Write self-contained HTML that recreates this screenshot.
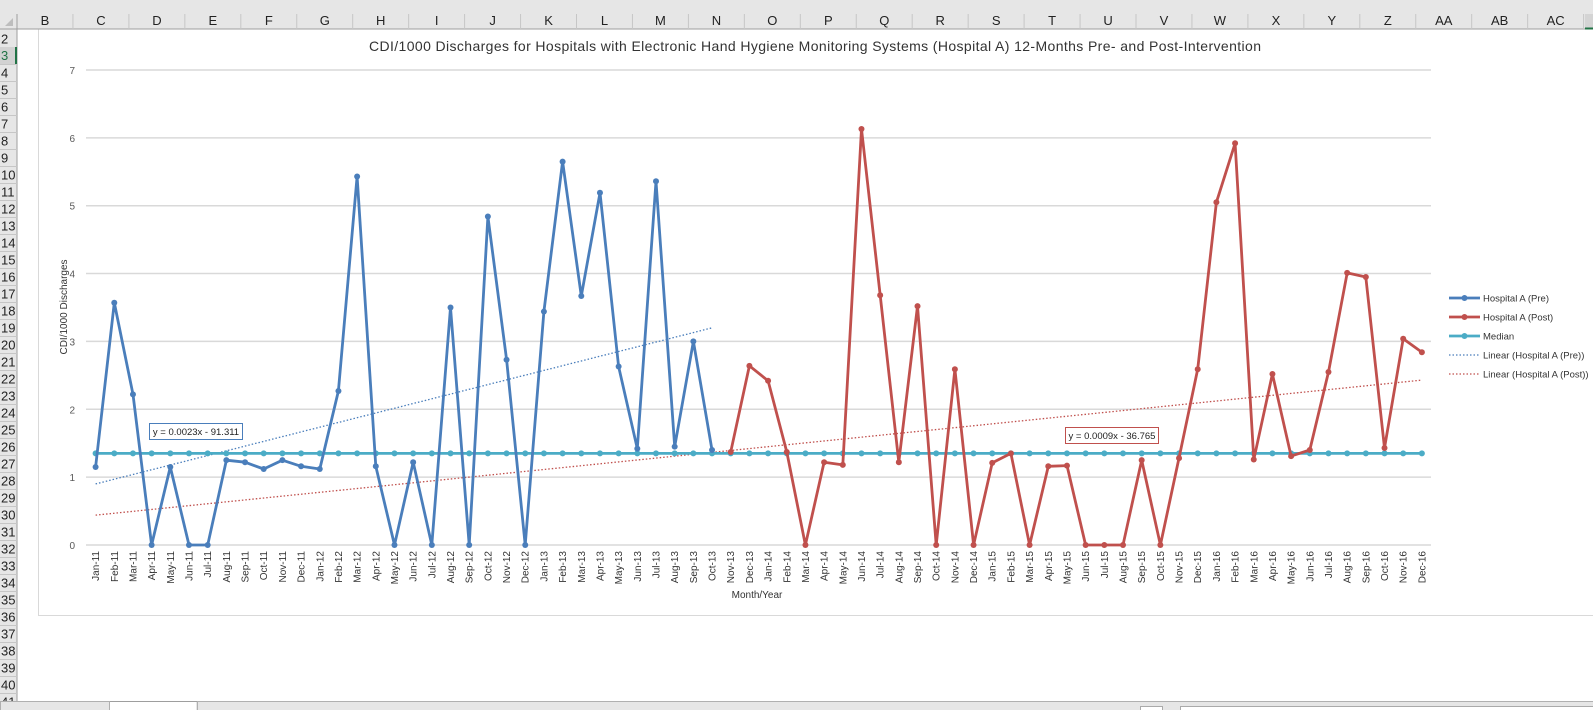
<!DOCTYPE html>
<html><head><meta charset="utf-8"><style>
body{margin:0;width:1593px;height:710px;overflow:hidden;background:#fff;font-family:"Liberation Sans",sans-serif;position:relative}
</style></head><body>
<svg id="s" width="1593" height="710" xmlns="http://www.w3.org/2000/svg" style="position:absolute;left:0;top:0;font-family:'Liberation Sans',sans-serif">
</svg>
<script>
const s=document.getElementById('s');let h='';
// chart
h+='<rect x="38.5" y="20.5" width="1600" height="595" fill="#fff" stroke="#d9d9d9"/>';
const Y=v=>545-v*67.86, X=i=>95.6+i*18.68;
for(let v=0;v<=7;v++){h+=`<line x1="86" y1="${Y(v)}" x2="1431" y2="${Y(v)}" stroke="#d9d9d9" stroke-width="1.5"/><text x="75" y="${Y(v)+4}" font-size="10" text-anchor="end" fill="#595959">${v}</text>`;}
h+='<text x="815" y="51" font-size="14" text-anchor="middle" fill="#333" textLength="892">CDI/1000 Discharges for Hospitals with Electronic Hand Hygiene Monitoring Systems (Hospital A) 12-Months Pre- and Post-Intervention</text>';
h+='<text transform="translate(67,307) rotate(-90)" font-size="10" text-anchor="middle" fill="#333">CDI/1000 Discharges</text>';
h+='<text x="757" y="598" font-size="10" text-anchor="middle" fill="#333">Month/Year</text>';
const m=['Jan','Feb','Mar','Apr','May','Jun','Jul','Aug','Sep','Oct','Nov','Dec'];
for(let i=0;i<72;i++){const lab=m[i%12]+'-'+(11+Math.floor(i/12));h+=`<text transform="translate(${X(i)+3.5},551) rotate(-90)" font-size="10" text-anchor="end" fill="#333">${lab}</text>`;}
const pre=[1.15,3.57,2.22,0,1.15,0,0,1.25,1.22,1.12,1.25,1.16,1.12,2.27,5.43,1.16,0,1.22,0,3.5,0,4.84,2.73,0,3.44,5.65,3.67,5.19,2.63,1.42,5.36,1.45,3.0,1.4];
const post=[1.37,2.64,2.42,1.37,0,1.22,1.18,6.13,3.68,1.22,3.52,0,2.59,0,1.21,1.35,0,1.16,1.17,0,0,0,1.25,0,1.28,2.59,5.05,5.92,1.26,2.52,1.31,1.4,2.55,4.01,3.95,1.43,3.04,2.84];
h+=`<line x1="${X(0)}" y1="${Y(0.9)}" x2="${X(33)}" y2="${Y(3.2)}" stroke="#4a7ebb" stroke-width="1.3" stroke-dasharray="1.5,2"/>`;
h+=`<line x1="${X(0)}" y1="${Y(0.44)}" x2="${X(71)}" y2="${Y(2.43)}" stroke="#c0504d" stroke-width="1.3" stroke-dasharray="1.5,2"/>`;
function ser(d,off,c){let p=d.map((v,i)=>X(i+off).toFixed(1)+','+Y(v).toFixed(1)).join(' ');let r=`<polyline points="${p}" fill="none" stroke="${c}" stroke-width="2.8" stroke-linejoin="round"/>`;d.forEach((v,i)=>r+=`<circle cx="${X(i+off)}" cy="${Y(v)}" r="3" fill="${c}"/>`);return r;}
h+=ser(Array(72).fill(1.35),0,'#4bacc6');
h+=ser(pre,0,'#4a7ebb');h+=ser(post,34,'#c0504d');
h+='<rect x="149.5" y="423.5" width="93" height="16" fill="#fff" stroke="#4a7ebb"/><text x="196" y="435" font-size="9.5" text-anchor="middle" fill="#222">y = 0.0023x - 91.311</text>';
h+='<rect x="1065.5" y="427.5" width="93" height="16" fill="#fff" stroke="#c0504d"/><text x="1112" y="439" font-size="9.5" text-anchor="middle" fill="#222">y = 0.0009x - 36.765</text>';
const L=[['Hospital A (Pre)','#4a7ebb',0],['Hospital A (Post)','#c0504d',0],['Median','#4bacc6',0],['Linear (Hospital A (Pre))','#4a7ebb',1],['Linear (Hospital A (Post))','#c0504d',1]];
L.forEach((l,i)=>{const y=298+i*19;if(l[2])h+=`<line x1="1449" y1="${y}" x2="1479" y2="${y}" stroke="${l[1]}" stroke-width="1.3" stroke-dasharray="1.5,2"/>`;else h+=`<line x1="1449" y1="${y}" x2="1480" y2="${y}" stroke="${l[1]}" stroke-width="2.8"/><circle cx="1464.5" cy="${y}" r="3" fill="${l[1]}"/>`;h+=`<text x="1483" y="${y+3.5}" font-size="9.5" fill="#333">${l[0]}</text>`;});
// header (drawn over chart)
h+='<rect x="0" y="0" width="1593" height="29" fill="#e6e6e6"/><rect x="0" y="0" width="17" height="710" fill="#e6e6e6"/>';
h+='<line x1="0" y1="29" x2="1593" y2="29" stroke="#9e9e9e"/><line x1="17" y1="14" x2="17" y2="702" stroke="#9e9e9e"/>';
h+='<polygon points="13,18 13,26 5,26" fill="#bdbdbd"/>';
const cols=['B','C','D','E','F','G','H','I','J','K','L','M','N','O','P','Q','R','S','T','U','V','W','X','Y','Z','AA','AB','AC'];
cols.forEach((c,i)=>{const x0=17+i*55.95;h+=`<line x1="${x0+55.95}" y1="14" x2="${x0+55.95}" y2="29" stroke="#c6c6c6"/><text x="${x0+28}" y="25" font-size="13" text-anchor="middle" fill="#222">${c}</text>`;});
h+='<rect x="1585" y="14" width="8" height="15" fill="#d4d4d4"/><line x1="1585" y1="28.5" x2="1593" y2="28.5" stroke="#217346" stroke-width="2"/>';
for(let r=2;r<=41;r++){const y=30.5+(r-2)*17;h+=`<line x1="0" y1="${y+17}" x2="17" y2="${y+17}" stroke="#c6c6c6"/><text x="1" y="${y+13}" font-size="13" fill="#222">${r}</text>`;}
h+='<rect x="0" y="47" width="17" height="17" fill="#d2d2d2"/><text x="1" y="60" font-size="13" fill="#217346">3</text><line x1="16" y1="47" x2="16" y2="64" stroke="#217346" stroke-width="2"/>';
// bottom bar
h+='<rect x="0" y="701" width="1593" height="9" fill="#e6e6e6"/><line x1="0" y1="701.5" x2="1593" y2="701.5" stroke="#9e9e9e"/>';
h+='<rect x="0.5" y="701.5" width="109" height="10" fill="#e6e6e6" stroke="#b0b0b0"/><rect x="110" y="702" width="86" height="8" fill="#fff"/><rect x="197.5" y="701.5" width="1396" height="10" fill="#e6e6e6" stroke="#b0b0b0"/>';
h+='<rect x="1140.5" y="706.5" width="22" height="5" fill="#fff" stroke="#aaa"/><rect x="1180.5" y="706.5" width="413" height="5" fill="#fff" stroke="#aaa"/>';
s.innerHTML=h;
</script>
</body></html>
